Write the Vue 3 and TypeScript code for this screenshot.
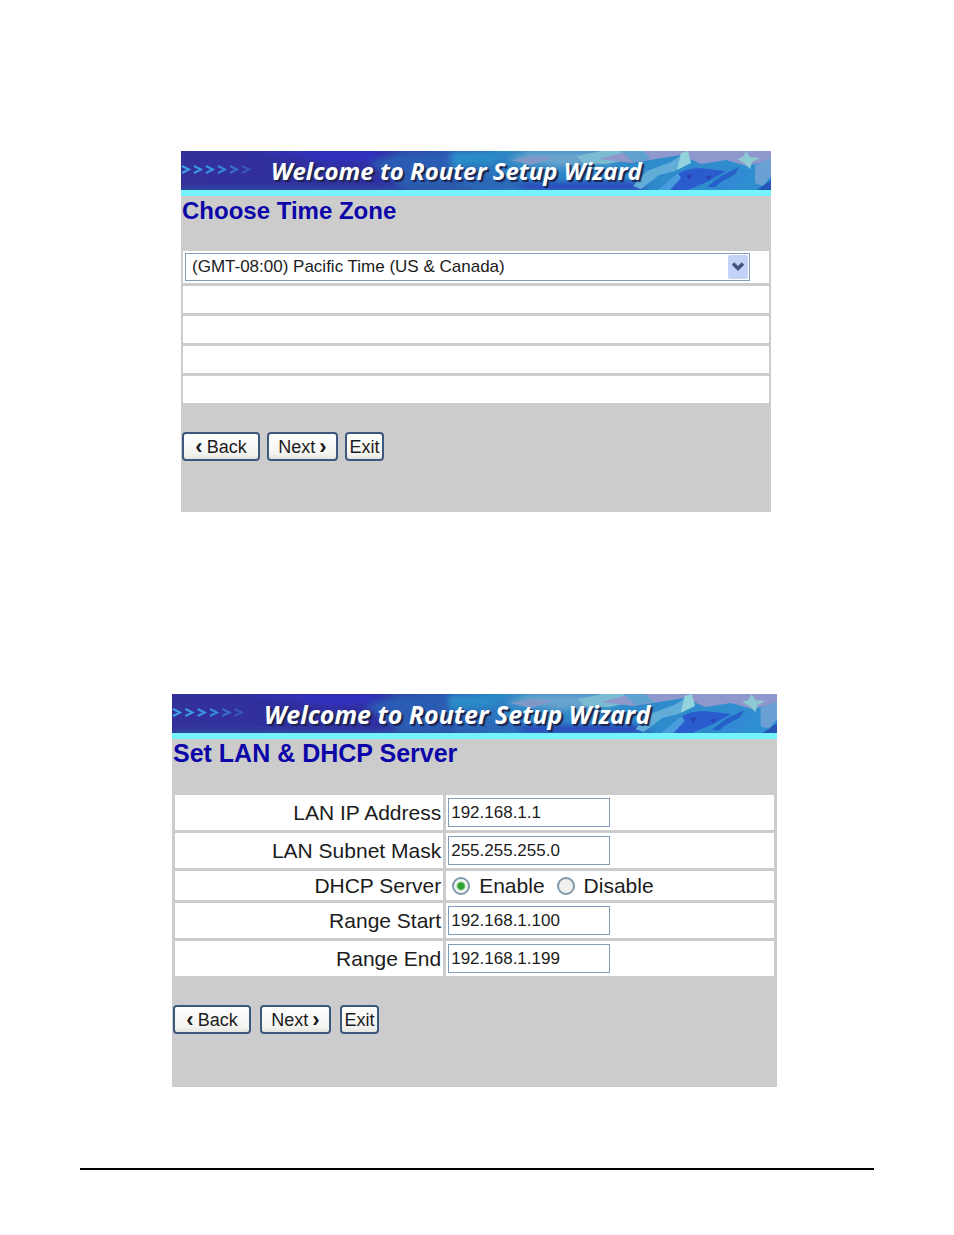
<script setup lang="ts">
import { ref } from 'vue'

interface Field {
  id: string
  label: string
  kind: 'text' | 'radio'
}

const timeZone = ref('pst')
const dhcp = ref('enable')
const values = ref<Record<string, string>>({
  ip: '192.168.1.1',
  mask: '255.255.255.0',
  start: '192.168.1.100',
  end: '192.168.1.199',
})

const fields: Field[] = [
  { id: 'ip', label: 'LAN IP Address', kind: 'text' },
  { id: 'mask', label: 'LAN Subnet Mask', kind: 'text' },
  { id: 'dhcp', label: 'DHCP Server', kind: 'radio' },
  { id: 'start', label: 'Range Start', kind: 'text' },
  { id: 'end', label: 'Range End', kind: 'text' },
]

const panels = [
  { id: 'zone', title: 'Choose Time Zone' },
  { id: 'lan', title: 'Set LAN & DHCP Server' },
]

const arrows = ['#3fa0e8', '#3b9ae2', '#3a94de', '#378ad6', '#3a6fc4', '#3a58b4']
</script>

<template>
  <div class="page">
    <main class="sheet">
      <section v-for="p in panels" :key="p.id" class="panel" :class="p.id">
        <header class="banner">
          <svg class="art" viewBox="0 0 590 39" preserveAspectRatio="none" aria-hidden="true">
            <defs>
              <linearGradient :id="p.id + '-base'" x1="0" x2="1" y1="0" y2="0">
                <stop offset="0" stop-color="#33309a" />
                <stop offset="0.34" stop-color="#302fa0" />
                <stop offset="0.46" stop-color="#2b50ae" />
                <stop offset="0.56" stop-color="#2e86c6" />
                <stop offset="1" stop-color="#2f8fd0" />
              </linearGradient>
              <filter :id="p.id + '-soft'" x="-10%" y="-30%" width="120%" height="160%">
                <feGaussianBlur stdDeviation="3" />
              </filter>
              <filter :id="p.id + '-edge'" x="-10%" y="-30%" width="120%" height="160%">
                <feGaussianBlur stdDeviation="0.7" />
              </filter>
            </defs>
            <rect width="590" height="39" :fill="`url(#${p.id}-base)`" />
            <g :filter="`url(#${p.id}-soft)`">
              <path d="M60 0H210L190 9Q150 14 118 5Z" fill="#3230c4" />
              <path d="M188 12L222 0H310L290 16L260 39H225Z" fill="#2c5cb4" />
              <path d="M270 0H330L310 14L270 16Z" fill="#2b8cc8" />
              <path d="M262 39L300 25L350 28L340 39Z" fill="#2b68b8" />
              <path d="M335 39L345 32L450 31L470 39Z" fill="#2b3cb8" />
              <path d="M325 8L350 0H450L430 12L380 16Z" fill="#6ba4cc" />
              <path d="M0 37H300V41H0Z" fill="#2f5aa0" />
            </g>
            <g :filter="`url(#${p.id}-edge)`">
              <path d="M330 9L352 5L372 7L350 14Z" fill="#7f98c8" />
              <path d="M396 5L420 0H440L446 9L425 13L402 12Z" fill="#7bbcd2" />
              <path d="M418 8L448 0H590V9L566 15L545 9L520 13L500 4L450 12Z" fill="#8f98cc" />
              <path d="M440 0L452 11L470 8L462 0Z" fill="#5ea2d0" />
              <path d="M466 20L490 11L502 3L508 9L494 20L478 24L460 38L452 35Z" fill="#62add8" />
              <path d="M500 2L507 0L510 12L496 19Z" fill="#93d4dc" />
              <path d="M488 32Q496 18 518 17L545 20L528 30L507 39H480Z" fill="#2b5bd0" />
              <path d="M540 25L558 16L552 28L538 36H526Z" fill="#2860c8" />
              <path d="M477 39L497 22L500 27L489 39Z" fill="#4a9ddc" />
              <path d="M505 24L512 23L508 29ZM524 26L530 24L529 29Z" fill="#2944b4" />
              <path d="M556 8L562 6L565 0L569 6L579 7L571 11L569 18L563 12Z" fill="#8ecad4" />
              <path d="M540 31L562 19L571 20L556 32L548 39H530Z" fill="#3189d4" />
              <path d="M574 14L590 7V25L582 35L574 32Z" fill="#6aa0d4" />
              <path d="M576 39L590 29V39Z" fill="#2757ba" />
            </g>
            <path
              v-for="(c, i) in arrows"
              :key="i"
              :d="`M${i * 12 + 1} 15l7 3.5l-7 3.5`"
              fill="none"
              :stroke="c"
              stroke-width="2"
            />
          </svg>
          <span class="welcome">Welcome to Router Setup Wizard</span>
        </header>

        <h1 class="title">{{ p.title }}</h1>

        <table v-if="p.id === 'zone'" class="grid">
          <tbody>
            <tr>
              <td>
                <div class="drop">
                  <select v-model="timeZone" aria-label="Time zone">
                    <option value="pst">(GMT-08:00) Pacific Time (US &amp; Canada)</option>
                  </select>
                  <svg class="chevron" viewBox="0 0 20 24" aria-hidden="true">
                    <rect width="20" height="24" rx="2" fill="#c4d2f8" />
                    <path d="M5 8.500L10 13.500L15 8.500" fill="none" stroke="#3f5580" stroke-width="3.500" />
                  </svg>
                </div>
              </td>
            </tr>
            <tr v-for="n in 4" :key="n"><td class="blank"></td></tr>
          </tbody>
        </table>

        <table v-else class="grid">
          <tbody>
            <tr v-for="f in fields" :key="f.id">
              <th scope="row">
                <label v-if="f.kind === 'text'" :for="f.id">{{ f.label }}</label>
                <span v-else :id="f.id">{{ f.label }}</span>
              </th>
              <td>
                <input v-if="f.kind === 'text'" :id="f.id" v-model="values[f.id]" class="box" type="text" />
                <div v-else class="choices" role="radiogroup" :aria-labelledby="f.id">
                  <label><input v-model="dhcp" type="radio" name="dhcp" value="enable" />Enable</label>
                  <label><input v-model="dhcp" type="radio" name="dhcp" value="disable" />Disable</label>
                </div>
              </td>
            </tr>
          </tbody>
        </table>

        <div class="actions">
          <button type="button" class="back"><b>‹</b>Back</button>
          <button type="button" class="next">Next<b>›</b></button>
          <button type="button" class="exit">Exit</button>
        </div>
      </section>
    </main>
    <hr class="rule" />
  </div>
</template>

<style>
body {
  margin: 0;
  background: #fff;
}
</style>

<style scoped>
.page {
  box-sizing: border-box;
  padding: 151px 80px 64px;
  font-family: "Liberation Sans", Arial, sans-serif;
  color: #1c1c1c;
}
.sheet {
  display: flex;
  flex-direction: column;
  gap: 182px;
}
.panel {
  background: #ccc;
}
.zone {
  margin: 0 103px 0 101px;
  padding-bottom: 51px;
}
.lan {
  margin: 0 97px 0 92px;
  padding-bottom: 53px;
}
.banner {
  position: relative;
  display: flex;
  align-items: center;
  height: 39px;
  padding-left: 90px;
  border-bottom: 6px solid #74f4fc;
  overflow: hidden;
}
.lan .banner {
  padding-left: 92px;
}
.art {
  position: absolute;
  inset: 0;
  width: 100%;
  height: 100%;
}
.welcome {
  position: relative;
  font: italic 700 24px/30px "Open Sans", "Noto Sans", sans-serif;
  color: #fff;
  white-space: nowrap;
  text-shadow: 2px 2px 1px #1b2450;
}
.lan .welcome {
  font-size: 25px;
}
.title {
  margin: 0;
  padding-left: 1px;
  font-size: 24px;
  line-height: 29px;
  font-weight: 700;
  color: #0c06a8;
  white-space: nowrap;
}
.lan .title {
  font-size: 25px;
}
.grid {
  width: 100%;
  margin-top: 23px;
  border-collapse: separate;
  border-spacing: 2px 3px;
  table-layout: fixed;
}
.lan .grid {
  margin-top: 24px;
  border-spacing: 3px;
}
td,
th {
  padding: 0;
  background: #fff;
}
.zone td {
  padding: 2px;
}
.zone .blank {
  height: 23px;
}
.drop {
  position: relative;
  width: 97%;
}
select {
  display: block;
  box-sizing: border-box;
  width: 100%;
  height: 28px;
  padding: 0 24px 0 6px;
  appearance: none;
  border: 1px solid #7f9db9;
  border-radius: 0;
  background: #fff;
  font: 17px/24px "Liberation Sans", Arial, sans-serif;
  color: #1c1c1c;
}
.chevron {
  position: absolute;
  top: 2px;
  right: 2px;
  width: 20px;
  height: 24px;
  pointer-events: none;
}
.lan th {
  width: 45%;
  padding-right: 2px;
  box-sizing: border-box;
  font-size: 21px;
  line-height: 29px;
  font-weight: 400;
  text-align: right;
  white-space: nowrap;
}
th + td {
  padding: 0 2px;
}
.box {
  display: block;
  box-sizing: border-box;
  width: 50%;
  height: 29px;
  margin: 3px 0;
  padding: 0 2px;
  border: 1px solid #7f9db9;
  border-radius: 0;
  background: #fff;
  font: 17px/24px "Liberation Sans", Arial, sans-serif;
  color: #1c1c1c;
}
.choices {
  display: flex;
  gap: 12px;
  padding-left: 4px;
  font-size: 21px;
  line-height: 29px;
}
.choices label {
  display: flex;
  align-items: center;
  gap: 9px;
}
.choices input {
  box-sizing: border-box;
  width: 18px;
  height: 18px;
  margin: 0;
  appearance: none;
  border: 2px solid #8098ac;
  border-radius: 50%;
  background: #f0f0ee;
}
.choices input:checked {
  background: radial-gradient(circle, #2fa32f 0 3px, #8fd08f 4px, #f4f8f4 5px);
}
.actions {
  display: flex;
  gap: 7px;
  margin-top: 26px;
  padding-left: 1px;
}
.lan .actions {
  gap: 9px;
}
button {
  display: flex;
  align-items: center;
  justify-content: center;
  gap: 4px;
  box-sizing: border-box;
  height: 29px;
  padding: 0;
  border: 2px solid #3d587c;
  border-radius: 4px;
  background: linear-gradient(#fff, #f3f3f0 80%, #e2e2de);
  font: 18px/24px "Liberation Sans", Arial, sans-serif;
  color: #1c1c1c;
}
button b {
  font-size: 22px;
}
.back {
  width: 78px;
}
.next {
  width: 71px;
}
.exit {
  width: 39px;
}
.rule {
  height: 2px;
  margin: 81px 0 0;
  border: 0;
  background: #000;
}
</style>
